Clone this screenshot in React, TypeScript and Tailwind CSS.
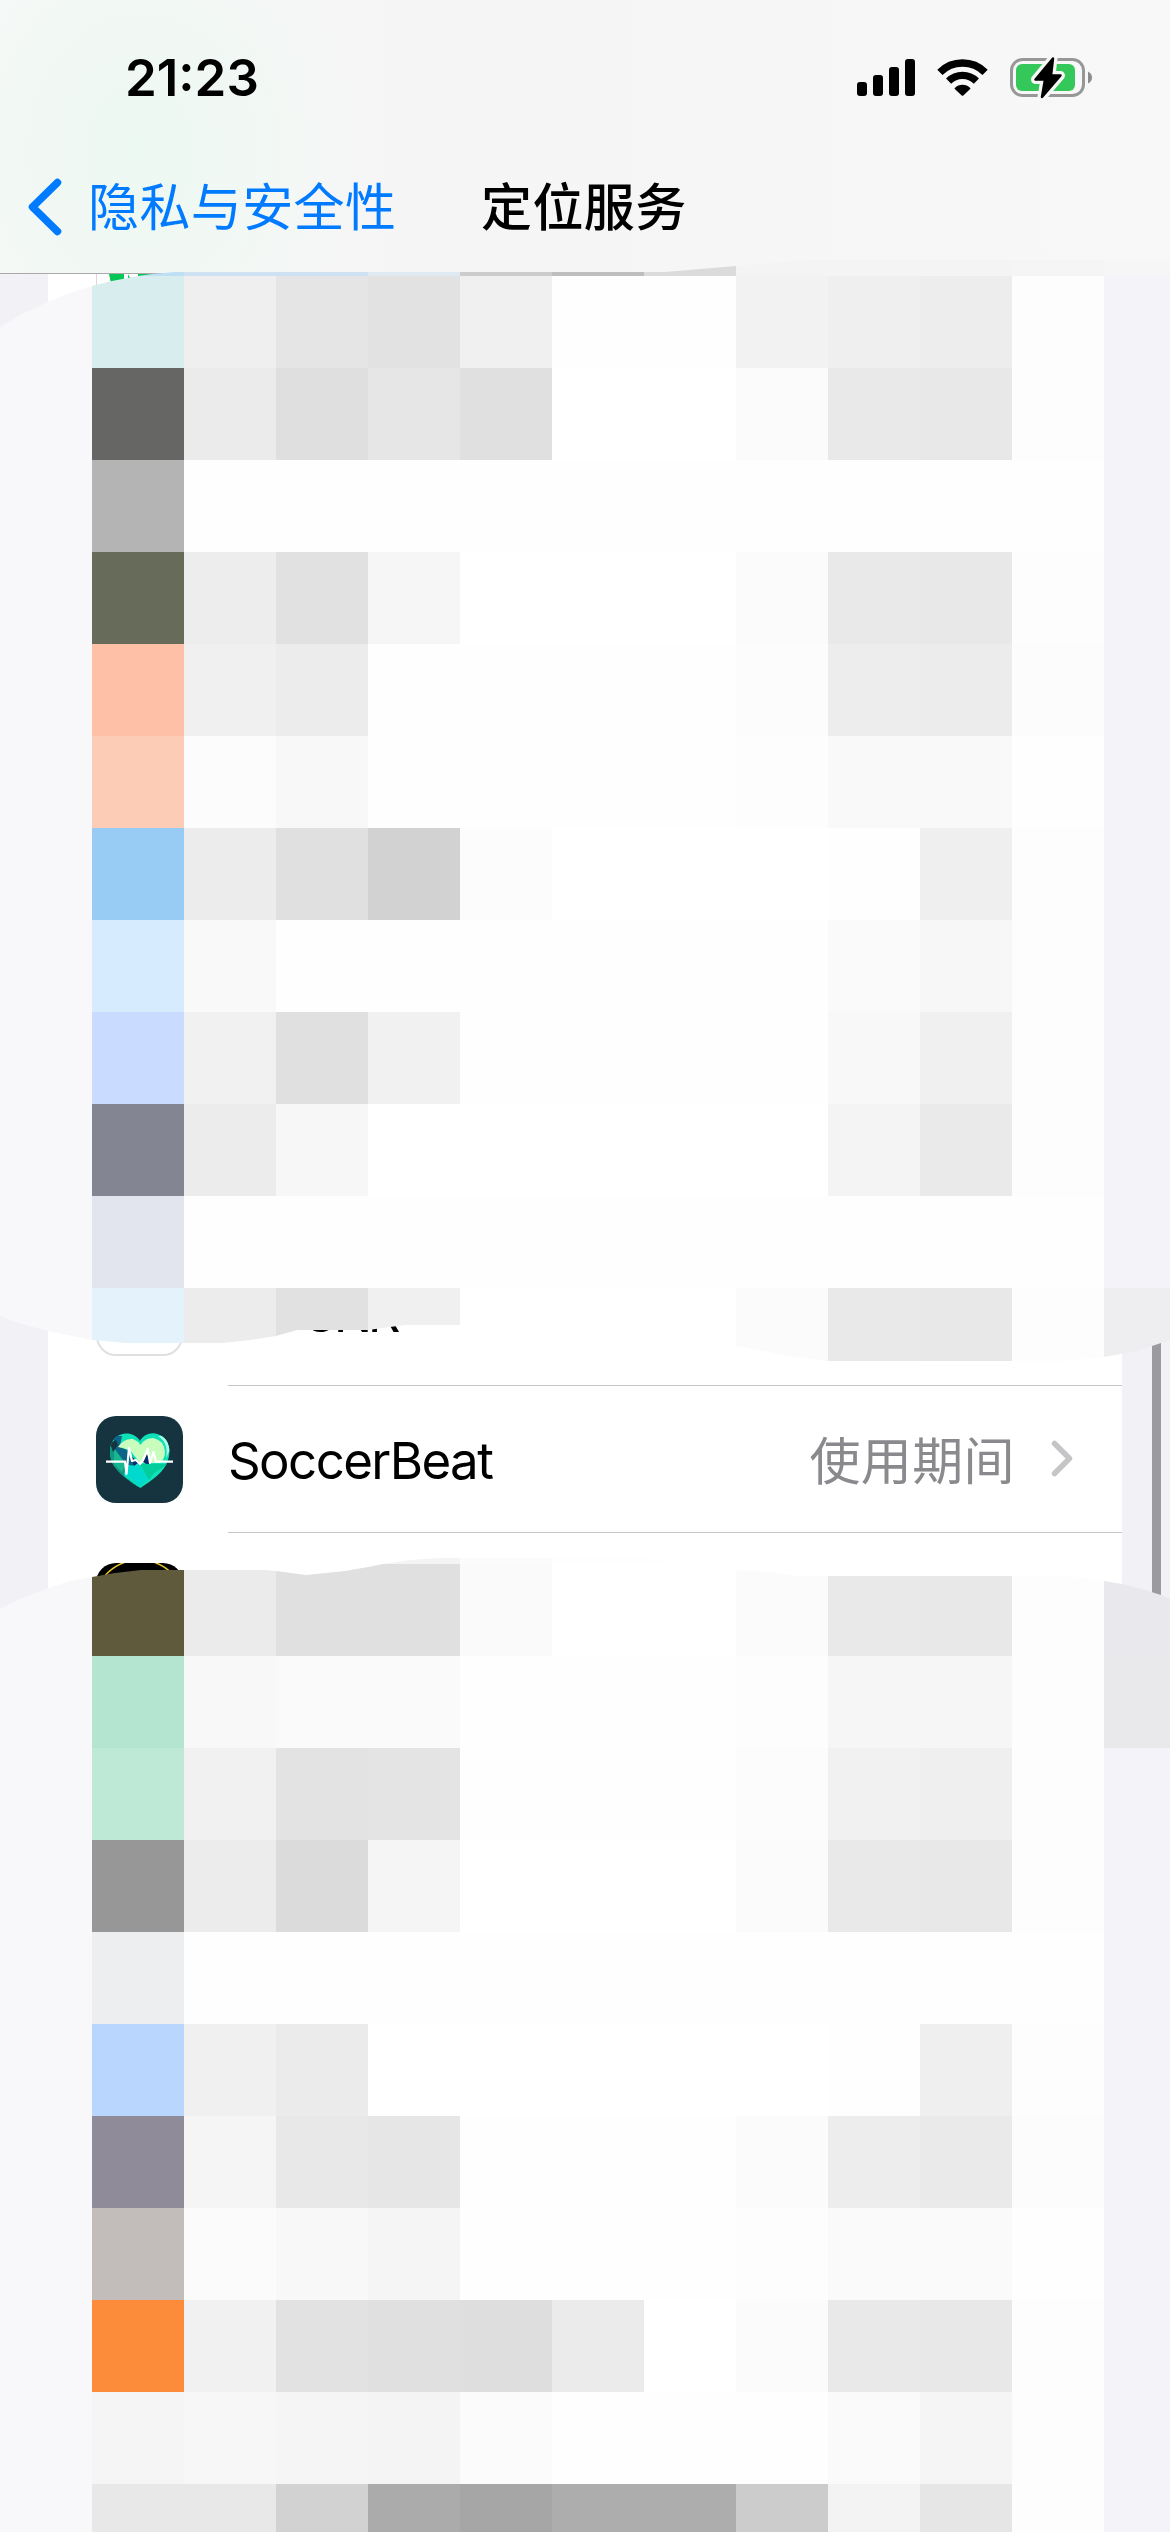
import React from "react";

const CJK = "font-['Noto_Sans_CJK_SC',sans-serif]";
const LATIN = "font-['Inter',sans-serif]";

// Each row: 13 tiles, left to right. The first is the left margin and the last the right margin.
const L = "#f8f8fb";
const R = "#f4f3f9";
const W = "#ffffff";
const E = "#fefefe";
const D = "#fdfdfd";

const upperTiles: string[][] = [
  [L, "#bedff4", "#cfe1f2", "#cfe1f2", "#dfe9f1", "#cccccc", "#bebebe", "#dbdbdb", "#f4f4f4", "#f4f4f4", "#f4f4f4", "#f5f5f5", "#f6f6f6"],
  [L, "#d7edee", "#efefef", "#e5e5e5", "#e2e2e2", "#f0f0f0", E, E, "#f2f2f2", "#efefef", "#ededed", D, R],
  [L, "#666664", "#ebebeb", "#dfdfdf", "#e6e6e6", "#e0e0e0", W, W, "#fbfbfb", "#e9e9e9", "#e8e8e8", D, R],
  [L, "#b4b4b4", E, E, E, E, E, E, E, E, E, E, R],
  [L, "#676b59", "#ededed", "#e1e1e1", "#f6f6f6", W, W, W, "#fbfbfb", "#e9e9e9", "#e8e8e8", D, R],
  [L, "#ffc0a8", "#f0f0f0", "#ececec", E, E, E, E, "#fcfcfc", "#ededed", "#ececec", "#fcfcfc", R],
  [L, "#fdccb7", "#fcfcfc", "#f8f8f8", E, E, E, E, D, "#f9f9f9", "#f9f9f9", E, R],
  [L, "#98ccf5", "#ececec", "#e0e0e0", "#d2d2d2", "#fcfcfc", W, W, W, E, "#efefef", D, R],
  [L, "#d6ecfe", "#f9f9f9", E, E, E, E, E, E, "#fafafa", "#f7f7f7", D, R],
  [L, "#c9dcff", "#f1f1f1", "#e0e0e0", "#f1f1f1", E, E, E, E, "#f8f8f8", "#f0f0f0", D, R],
  [L, "#848592", "#ececec", "#f7f7f7", W, W, W, W, W, "#f4f4f4", "#eaeaea", D, R],
  [L, "#e2e5ee", E, E, E, E, E, E, E, E, E, E, R],
  [L, "#e4f3fb", "#ececec", "#e1e1e1", "#f0f0f0", W, W, W, "#fbfbfb", "#e9e9e9", "#e8e8e8", D, "#eeeef0"],
];

const lowerTiles: string[][] = [
  [L, W, W, W, "#f4f4f4", "#fbfbfb", E, E, W, W, W, W, R],
  [L, "#605a3c", "#ebebeb", "#e0e0e0", "#e0e0e0", "#fafafa", W, W, "#fbfbfb", "#e9e9e9", "#e8e8e8", D, "#e8e8ed"],
  [L, "#b4e5d1", "#f8f8f8", "#fafafa", "#fafafa", E, E, E, D, "#f6f6f6", "#f6f6f6", D, "#e9e9ec"],
  [L, "#bde9d6", "#f1f1f1", "#e3e3e3", "#e4e4e4", E, E, E, "#fcfcfc", "#f1f1f1", "#efefef", D, R],
  [L, "#979797", "#ececec", "#dbdbdb", "#f5f5f5", W, W, W, "#fbfbfb", "#e9e9e9", "#e8e8e8", D, R],
  [L, "#edeef0", E, E, E, E, E, E, E, E, E, E, R],
  [L, "#b8d6fe", "#f0f0f0", "#ebebeb", W, W, W, W, W, E, "#efefef", D, R],
  [L, "#8f8b99", "#f5f5f5", "#e8e8e8", "#e6e6e6", E, E, E, "#fbfbfb", "#ededed", "#eaeaea", "#fcfcfc", R],
  [L, "#c2bdbb", "#fbfbfb", "#f8f8f8", "#f5f5f5", E, E, E, D, "#fafafa", "#fafafa", E, R],
  [L, "#fd8c3a", "#f1f1f1", "#e2e2e2", "#e0e0e0", "#dedede", "#ebebeb", W, "#fbfbfb", "#e9e9e9", "#e8e8e8", D, R],
  [L, "#f5f5f5", "#f7f7f7", "#f5f5f5", "#f4f4f4", "#fbfbfb", E, E, E, "#fafafa", "#f5f5f5", D, R],
  [L, "#e8e8e8", "#e8e8e8", "#d2d2d2", "#ababab", "#a6a6a6", "#adadad", "#adadad", "#cccccc", "#f3f3f3", "#e6e6e6", D, R],
];

function Mosaic({ tiles, className }: { tiles: string[][]; className: string }) {
  return (
    <div className={`absolute left-0 grid auto-rows-[92px] grid-cols-[repeat(12,92px)_66px] overflow-hidden ${className}`}>
      {tiles.flatMap((row, y) =>
        row.map((color, x) => <div key={`${y}-${x}`} style={{ backgroundColor: color }} />)
      )}
    </div>
  );
}

function StatusBar() {
  return (
    <div className="flex h-[141px] items-center pt-[14px] pl-[125px] pr-[77px]">
      <span className={`${LATIN} text-[51px] leading-none font-semibold`}>21:23</span>
      <svg className="ml-auto h-[37px] w-[58px]" viewBox="0 0 58 37">
        <rect x="0" y="23" width="10" height="14" rx="3" />
        <rect x="16" y="16" width="10" height="21" rx="3" />
        <rect x="32" y="8" width="10" height="29" rx="3" />
        <rect x="48" y="0" width="10" height="37" rx="3" />
      </svg>
      <svg className="ml-[22px] h-[37px] w-[51px]" viewBox="0 0 51 37">
        <path d="M2.9 13.4A32 32 0 0 1 48.1 13.4" fill="none" stroke="#000" strokeWidth="7.4" />
        <path d="M11.6 22.1A19.7 19.7 0 0 1 39.4 22.1" fill="none" stroke="#000" strokeWidth="7.2" />
        <path d="M17.8 29a11 11 0 0 1 15.4 0q.5.6 0 1.100l-6.900 6.300q-.8.700-1.600 0l-6.900-6.300q-.5-.5 0-1.100z" />
      </svg>
      <svg className="ml-[22px] h-[48px] w-[83px]" viewBox="0 0 83 48">
        <rect x="1.500" y="5.500" width="72" height="36" rx="11" fill="none" stroke="#979797" strokeWidth="3" />
        <rect x="6" y="10" width="59" height="27" rx="6" fill="#34c759" />
        <path d="M78 17.500q4 2 4 6t-4 6z" fill="#8c8c8c" />
        <path d="M43 4.500L25.500 25.500h9.500L32 43L50.500 21.500H41z" fill="#f7f7f7" stroke="#f7f7f7" strokeWidth="9" strokeLinejoin="round" />
        <path d="M43 4.500L25.500 25.500h9.500L32 43L50.500 21.500H41z" stroke="#000" strokeWidth="2.500" strokeLinejoin="round" />
      </svg>
    </div>
  );
}

function NavBar() {
  return (
    <div className={`${CJK} flex h-[132px] items-center pb-[6px] pl-[28px] text-[51px] leading-[60px] whitespace-nowrap`}>
      <svg className="mt-[6px] h-[58px] w-[34px]" viewBox="0 0 34 58">
        <path d="M29.500 4.500L4.500 29L29.500 53.500" fill="none" stroke="#007aff" strokeWidth="7.500" strokeLinecap="round" strokeLinejoin="round" />
      </svg>
      <span className="ml-[26px] w-[308px] tracking-[0.4px] text-[#007aff]">隐私与安全性</span>
      <h1 className="ml-[85px] font-medium tracking-[0.4px]">定位服务</h1>
    </div>
  );
}

function SoccerBeatIcon() {
  return (
    <svg className="h-[87px] w-[87px]" viewBox="0 0 87 87">
      <defs>
        <clipPath id="heart">
          <path d="M44 25C39 16 26 15 19 22C12 29 13 42 18 50C24 58 34 66 44.500 72C55 65 65 58 70 49C75 39 75 27 67 21C59 14.500 48 17 44 25z" />
        </clipPath>
      </defs>
      <rect width="87" height="87" rx="20" fill="#163440" />
      <g clipPath="url(#heart)">
        <rect width="87" height="87" fill="#0ee0b8" />
        <path d="M10 34L18 26L31 44L28 60L44 72V76L10 60z" fill="#10977f" />
        <path d="M18 32L30 48L26 56L18 48z" fill="#18b591" />
        <path d="M18 20L26 20L24 30L34 36L40 52L30 48L18 32z" fill="#0c6588" />
        <path d="M14 27L20 24L22 29L17 36z" fill="#163440" />
        <path d="M22 31Q28 22 37 23Q42 25 44.500 29Q49 22 57 22Q68 24 69 36Q69 43 64 47L44 47L34 34z" fill="#c9fdbd" />
        <path d="M34 38L42 47L38 50zM47 46L51 38L55 47L52 49z" fill="#082a68" />
        <path d="M30 49L44 50L52 62L58 57L44 71L28 58z" fill="#00d9cd" />
        <path d="M44 48H72L58 57L53 64z" fill="#00cd99" />
        <path d="M62 20Q73 27 70 42L74 34L70 20z" fill="#a8fbe6" />
      </g>
      <path d="M10 45.700H29L30.500 58L33 32L36 45L40 44L44 48L47 44L51.700 33L54 47L57.500 36L60 45.700H77" fill="none" stroke="#fff" strokeWidth="2.200" strokeLinejoin="round" />
    </svg>
  );
}

function Row({ icon, name, value }: { icon?: React.ReactNode; name?: React.ReactNode; value?: string }) {
  return (
    <div className="flex h-[147px] shrink-0 pl-[48px]">
      <div className="flex w-[132px] items-center">{icon}</div>
      <div className="flex flex-1 items-center border-b border-[#c6c6c8] pr-[49px]">
        <div className={`${LATIN} pt-[2px] text-[51px] leading-none tracking-[-1.6px]`}>{name}</div>
        {value && (
          <>
            <span className={`${CJK} ml-auto pb-[3px] text-[51px] leading-[60px] tracking-[0.4px] text-[#8a8a8e]`}>{value}</span>
            <svg className="mb-[2px] ml-[36px] h-[37px] w-[22px]" viewBox="0 0 22 37">
              <path d="M3.500 3.500L18.500 18.500L3.500 33.500" fill="none" stroke="#c5c5c7" strokeWidth="5.500" strokeLinecap="round" strokeLinejoin="round" />
            </svg>
          </>
        )}
      </div>
    </div>
  );
}

export default function App() {
  return (
    <div className="relative flex h-[2532px] w-[1170px] flex-col overflow-hidden bg-[#f2f1f6] text-black">
      <header className="h-[274px] shrink-0 border-b border-[#a9a9aa] bg-[radial-gradient(ellipse_220px_260px_at_140px_150px,#ecf9f2_0%,#f1f8f4_45%,transparent_100%),linear-gradient(90deg,#f7f9f8_0%,#f5f5f5_40%,#f8f8f8_100%)]">
        <StatusBar />
        <NavBar />
      </header>

      <main className="mx-[48px] flex flex-1 flex-col overflow-hidden bg-white">
        <div className="flex h-[83px] shrink-0 pl-[48px]">
          <div className="h-[53px] w-[87px] rounded-b-[20px] border border-t-0 border-[#d9d9d9] bg-white">
            <svg className="h-[24px] w-[80px]" viewBox="0 0 80 24">
              <path d="M12 0H27V14H15zM31 0L35 8H31zM41 0H56V10H41z" fill="#06c755" />
            </svg>
          </div>
        </div>
        <div className="h-[882px] shrink-0" />
        <Row
          icon={<div className="h-[87px] w-[87px] rounded-[20px] border-2 border-[#e0e0e0]" />}
          name={<span className="pl-[73px] tracking-[-4.5px]">CNR</span>}
        />
        <Row icon={<SoccerBeatIcon />} name="SoccerBeat" value="使用期间" />
        <Row
          icon={
            <svg className="h-[87px] w-[87px]" viewBox="0 0 87 87">
              <rect width="87" height="87" rx="20" />
              <circle cx="43.500" cy="43" r="46" fill="none" stroke="#e8c62c" strokeWidth="1.500" />
            </svg>
          }
        />
      </main>

      <div className="absolute top-[1320px] right-[9px] h-[300px] w-[9px] bg-[#9b9b9d]" />

      <Mosaic
        tiles={upperTiles}
        className="top-[184px] h-[1196px] w-[1170px] [clip-path:path('M0_143L22_130L48_118L70_109L92_102L112_97L138_92L152_90L175_88H665L736_82L806_76H1170V1156L1161_1159L1137_1167L1104_1173L1065_1177H828L790_1172L736_1162V1141H405L390_1143L368_1146H297L276_1152L250_1156L222_1159H125L92_1156L48_1147L22_1140L0_1132Z')]"
      />
      <Mosaic
        tiles={lowerTiles}
        className="top-[1472px] h-[1060px] w-[1170px] [clip-path:path('M0_137L22_126L48_116L70_109L92_105L115_101L141_98H265L276_99L306_103L345_99L368_95L383_92L410_88L440_86H645L677_91L736_98L770_100L796_104H1065L1085_106L1104_109L1122_112L1145_118L1161_123L1170_127V1060H0Z')]"
      />
    </div>
  );
}
